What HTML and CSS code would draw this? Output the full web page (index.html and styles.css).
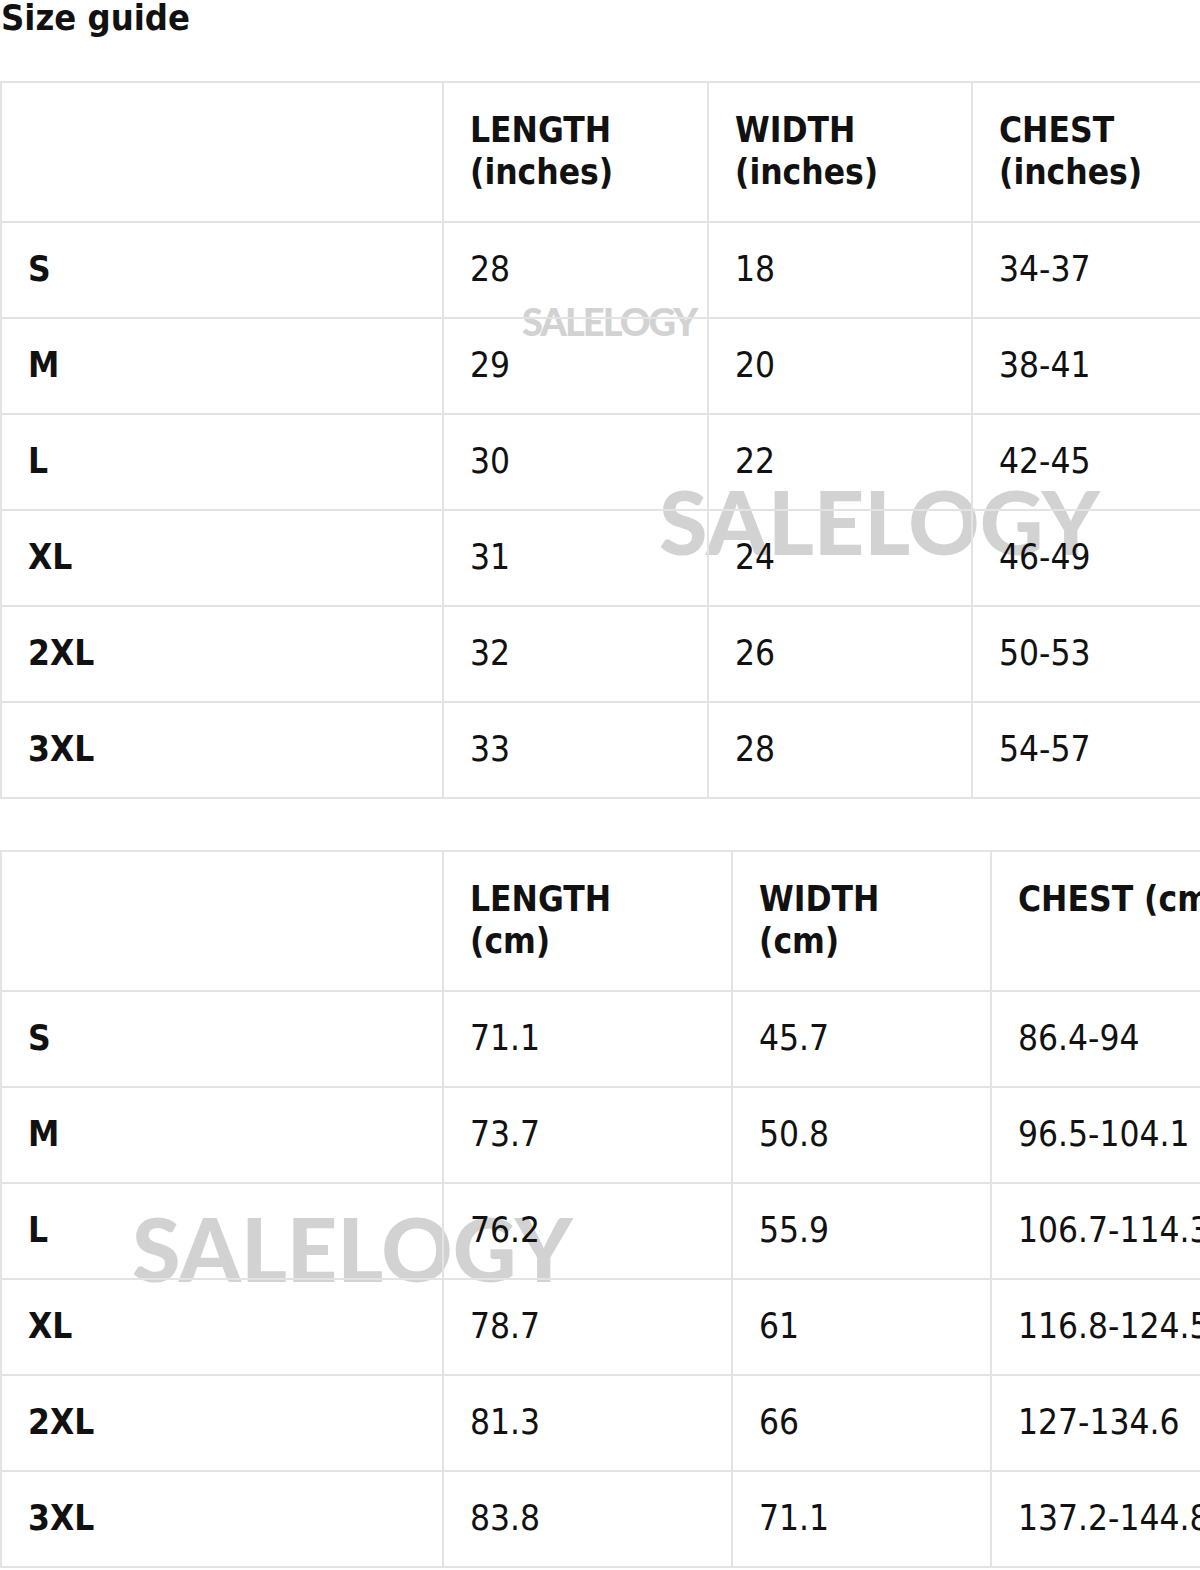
FILE: index.html
```html
<!DOCTYPE html>
<html>
<head>
<meta charset="utf-8">
<link rel="stylesheet" href="styles.css">
</head>
<body>
<div class="page">
  <h1 class="title">Size guide</h1>

  <div class="table-wrap">
    <div class="wm wm-small">SALELOGY</div>
    <div class="wm wm-large wm-1">SALELOGY</div>
    <table class="sizes t-in">
      <colgroup><col class="c1"><col class="c2a"><col class="c3a"><col class="c4"></colgroup>
      <thead>
        <tr><th></th><th>LENGTH<br>(inches)</th><th>WIDTH<br>(inches)</th><th>CHEST<br>(inches)</th></tr>
      </thead>
      <tbody>
        <tr><th>S</th><td>28</td><td>18</td><td>34-37</td></tr>
        <tr><th>M</th><td>29</td><td>20</td><td>38-41</td></tr>
        <tr><th>L</th><td>30</td><td>22</td><td>42-45</td></tr>
        <tr><th>XL</th><td>31</td><td>24</td><td>46-49</td></tr>
        <tr><th>2XL</th><td>32</td><td>26</td><td>50-53</td></tr>
        <tr><th>3XL</th><td>33</td><td>28</td><td>54-57</td></tr>
      </tbody>
    </table>
  </div>

  <div class="table-wrap second">
    <div class="wm wm-large wm-2">SALELOGY</div>
    <table class="sizes t-cm">
      <colgroup><col class="c1"><col class="c2b"><col class="c3b"><col class="c4"></colgroup>
      <thead>
        <tr><th></th><th>LENGTH<br>(cm)</th><th>WIDTH<br>(cm)</th><th class="nowrap">CHEST (cm)</th></tr>
      </thead>
      <tbody>
        <tr><th>S</th><td>71.1</td><td>45.7</td><td>86.4-94</td></tr>
        <tr><th>M</th><td>73.7</td><td>50.8</td><td>96.5-104.1</td></tr>
        <tr><th>L</th><td>76.2</td><td>55.9</td><td>106.7-114.3</td></tr>
        <tr><th>XL</th><td>78.7</td><td>61</td><td>116.8-124.5</td></tr>
        <tr><th>2XL</th><td>81.3</td><td>66</td><td>127-134.6</td></tr>
        <tr><th>3XL</th><td>83.8</td><td>71.1</td><td>137.2-144.8</td></tr>
      </tbody>
    </table>
  </div>
</div>
</body>
</html>
```
FILE: styles.css
```css
html, body {
  margin: 0;
  padding: 0;
  background: #ffffff;
  overflow: hidden;
}
body {
  width: 1200px;
  height: 1570px;
  font-family: "DejaVu Sans Condensed", "DejaVu Sans", sans-serif;
  font-stretch: condensed;
  color: #111111;
}
.page {
  width: 1400px;
}
.title {
  margin: 0 0 46px 1px;
  font-size: 36px;
  line-height: 35px;
  font-weight: bold;
}
.table-wrap {
  position: relative;
  width: 1400px;
}
.table-wrap.second {
  margin-top: 51px;
}
.sizes {
  position: relative;
  z-index: 1;
  border-collapse: collapse;
  table-layout: fixed;
  width: 1270px;
  font-size: 35px;
  line-height: 42px;
}
.sizes th, .sizes td {
  border: 2px solid #e3e3e3;
  padding: 25px 26px 27px 26px;
  text-align: left;
  vertical-align: middle;
  background: transparent;
}
.sizes th { font-weight: bold; }
.sizes td { font-weight: normal; }
.sizes thead th { padding-top: 26px; padding-bottom: 28px; }
.nowrap { white-space: nowrap; vertical-align: top !important; }
.c1 { width: 442px; }
.c2a { width: 265px; }
.c3a { width: 264px; }
.c2b { width: 289px; }
.c3b { width: 259px; }
.c4 { width: 300px; }

.wm {
  position: absolute;
  z-index: 0;
  font-family: Lato, "DejaVu Sans", sans-serif;
  font-weight: 900;
  font-stretch: normal;
  color: #d2d2d2;
  white-space: nowrap;
  line-height: 1;
}
.wm-small {
  left: 522px;
  top: 221px;
  font-size: 38px;
  letter-spacing: -2px;
}
.wm-large {
  font-size: 88px;
  letter-spacing: 0px;
}
.wm-1 {
  left: 659px;
  top: 396px;
}
.wm-2 {
  left: 132px;
  top: 354px;
}
```
